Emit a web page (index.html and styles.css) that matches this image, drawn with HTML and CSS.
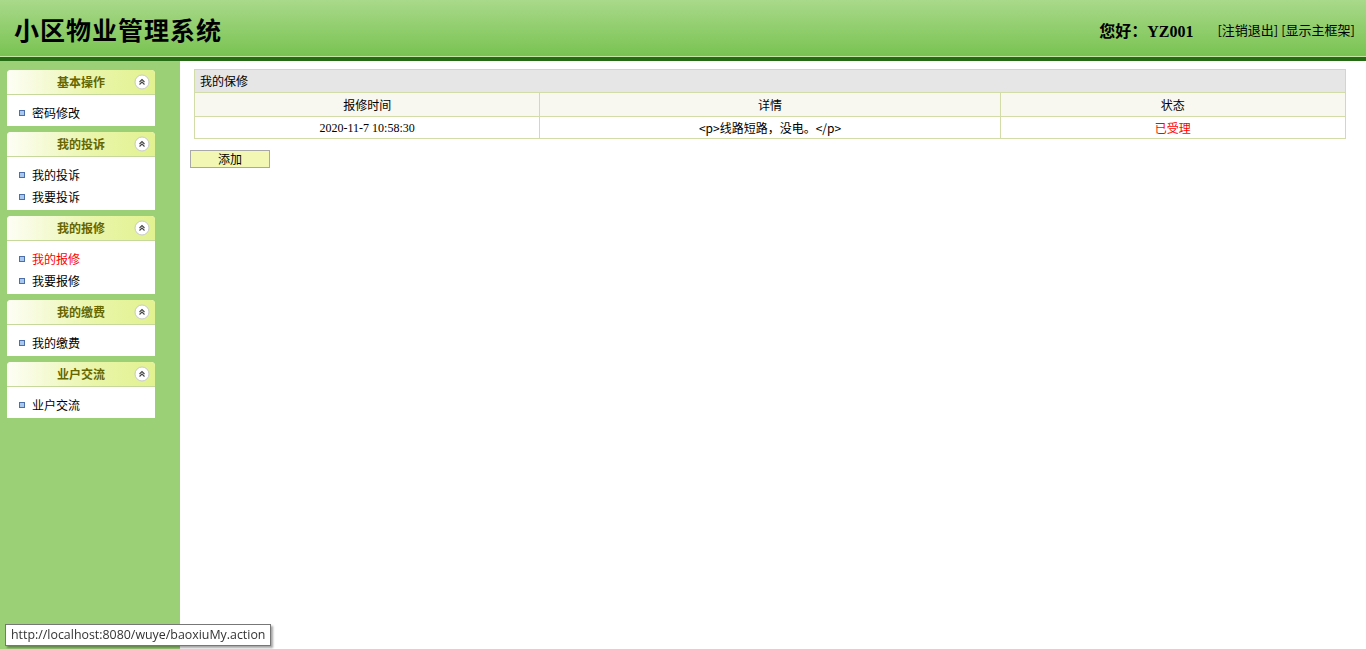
FILE: index.html
```html
<!DOCTYPE html>
<html lang="zh-CN">
<head>
    <meta charset="UTF-8">
    <title>小区物业管理系统</title>
    <link rel="stylesheet" href="styles.css">
</head>
<body>
    <div class="header">
        <div class="logo">小区物业管理系统</div>
        <div class="user-info">
            <span class="hello">您好：YZ001</span>
            <a href="#">[注销退出]</a>
            <a href="#">[显示主框架]</a>
        </div>
    </div>
    <div class="header-line"></div>

    <div class="main">
        <div class="sidebar">
            <div class="panel">
                <div class="panel-title">基本操作<span class="toggle"></span></div>
                <ul class="panel-body">
                    <li><a href="#">密码修改</a></li>
                </ul>
            </div>
            <div class="panel">
                <div class="panel-title">我的投诉<span class="toggle"></span></div>
                <ul class="panel-body">
                    <li><a href="#">我的投诉</a></li>
                    <li><a href="#">我要投诉</a></li>
                </ul>
            </div>
            <div class="panel">
                <div class="panel-title">我的报修<span class="toggle"></span></div>
                <ul class="panel-body">
                    <li><a href="#" class="active">我的报修</a></li>
                    <li><a href="#">我要报修</a></li>
                </ul>
            </div>
            <div class="panel">
                <div class="panel-title">我的缴费<span class="toggle"></span></div>
                <ul class="panel-body">
                    <li><a href="#">我的缴费</a></li>
                </ul>
            </div>
            <div class="panel">
                <div class="panel-title">业户交流<span class="toggle"></span></div>
                <ul class="panel-body">
                    <li><a href="#">业户交流</a></li>
                </ul>
            </div>
        </div>

        <div class="content">
            <table class="list">
                <tr class="caption">
                    <td colspan="3">我的保修</td>
                </tr>
                <tr class="head">
                    <td class="col-time">报修时间</td>
                    <td class="col-detail">详情</td>
                    <td class="col-state">状态</td>
                </tr>
                <tr class="row">
                    <td class="num">2020-11-7 10:58:30</td>
                    <td>&lt;p&gt;线路短路，没电。&lt;/p&gt;</td>
                    <td class="state">已受理</td>
                </tr>
            </table>
            <button class="btn-add">添加</button>
        </div>
    </div>

    <div class="status-tip">http://localhost:8080/wuye/baoxiuMy.action</div>

    <script>
        // draw the collapse icon in each panel title
        var icon = '<svg width="16" height="16" viewBox="0 0 16 16">' +
            '<circle cx="8" cy="8" r="7" fill="#fff" stroke="#c9c9c9"/>' +
            '<path d="M5.5 8 L8 5.5 L10.5 8 M5.5 10.5 L8 8 L10.5 10.5" fill="none" stroke="#444" stroke-width="1.1"/>' +
            '</svg>';
        document.querySelectorAll(".toggle").forEach(function (el) {
            el.innerHTML = icon;
        });
    </script>
</body>
</html>
```

FILE: styles.css
```css
html, body {
    margin: 0;
    padding: 0;
    height: 100%;
}
body {
    font-family: "Noto Sans CJK SC", "Liberation Sans", sans-serif;
    font-size: 12px;
    color: #000;
    display: flex;
    flex-direction: column;
}
a {
    color: #000;
    text-decoration: none;
}
.header {
    height: 56px;
    display: flex;
    justify-content: space-between;
    align-items: center;
    background: linear-gradient(to bottom, #a9d98a, #79c352);
    border-bottom: 1px solid #c4e6a4;
}
.logo {
    font-family: "Noto Sans CJK SC", serif;
    font-size: 25px;
    font-weight: bold;
    letter-spacing: 1px;
    padding-left: 14px;
    padding-top: 2px;
}
.user-info {
    display: flex;
    align-items: center;
    padding-right: 11px;
    padding-top: 3px;
    font-size: 13px;
}
.user-info .hello {
    font-family: "Liberation Serif", "Noto Sans CJK SC", serif;
    font-size: 16px;
    font-weight: bold;
    margin-right: 21px;
}
.user-info a {
    margin-left: 3px;
}
.header-line {
    height: 4px;
    background: #246b14;
}
.main {
    flex: 1;
    display: flex;
}
.sidebar {
    width: 180px;
    background: #9bd077;
    padding: 9px 0 0 7px;
    box-sizing: border-box;
}
.panel {
    width: 148px;
    margin-bottom: 6px;
    background: #fff;
    border-radius: 4px 4px 0 0;
}
.panel-title {
    height: 24px;
    line-height: 24px;
    position: relative;
    text-align: center;
    font-weight: bold;
    color: #666600;
    font-size: 12px;
    border-radius: 4px 4px 0 0;
    border-bottom: 1px solid #c6d89c;
    background: linear-gradient(to right, #fefef6, #e9f5a8 60%, #e2f290);
}
.toggle {
    position: absolute;
    right: 5px;
    top: 4px;
    width: 16px;
    height: 16px;
    line-height: 0;
}
.panel-body {
    list-style: none;
    margin: 0;
    padding: 7px 0 2px 12px;
}
.panel-body li {
    height: 22px;
    line-height: 22px;
    display: flex;
    align-items: center;
}
.panel-body li::before {
    content: "";
    width: 4px;
    height: 4px;
    border: 1px solid #4c6fa8;
    background: #a9c8f0;
    margin-right: 7px;
}
.panel-body a.active {
    color: #ff0000;
}
.content {
    flex: 1;
    padding: 8px 20px 0 10px;
}
.list {
    width: calc(100% - 4px);
    margin-left: 4px;
    border-collapse: collapse;
    border: 1px solid #d2dca9;
}
.list td {
    border: 1px solid #d2dca9;
    padding: 0;
    line-height: 16px;
    text-align: center;
}
.list .caption td {
    height: 22px;
    background: #e6e6e6;
    text-align: left;
    padding-left: 5px;
}
.list .head td {
    height: 23px;
    background: #f8f8f0;
}
.list .row td {
    height: 21px;
}
.col-time {
    width: 30%;
}
.col-detail {
    width: 40%;
}
.num {
    font-family: "Liberation Serif", serif;
}
.state {
    color: #ff0000;
}
.btn-add {
    margin-top: 11px;
    width: 80px;
    height: 18px;
    padding: 0;
    font-family: "Noto Sans CJK SC", sans-serif;
    font-size: 12px;
    line-height: 16px;
    background: #f2f8b4;
    border: 1px solid #a8a8a8;
}
.status-tip {
    position: fixed;
    left: 5px;
    bottom: 3px;
    padding: 0 5px;
    height: 20px;
    line-height: 20px;
    font-family: "Open Sans", "Liberation Sans", sans-serif;
    font-size: 12.4px;
    color: #333;
    background: #fff;
    border: 1px solid #777;
    box-shadow: 2px 2px 2px rgba(0, 0, 0, 0.35);
}
```
